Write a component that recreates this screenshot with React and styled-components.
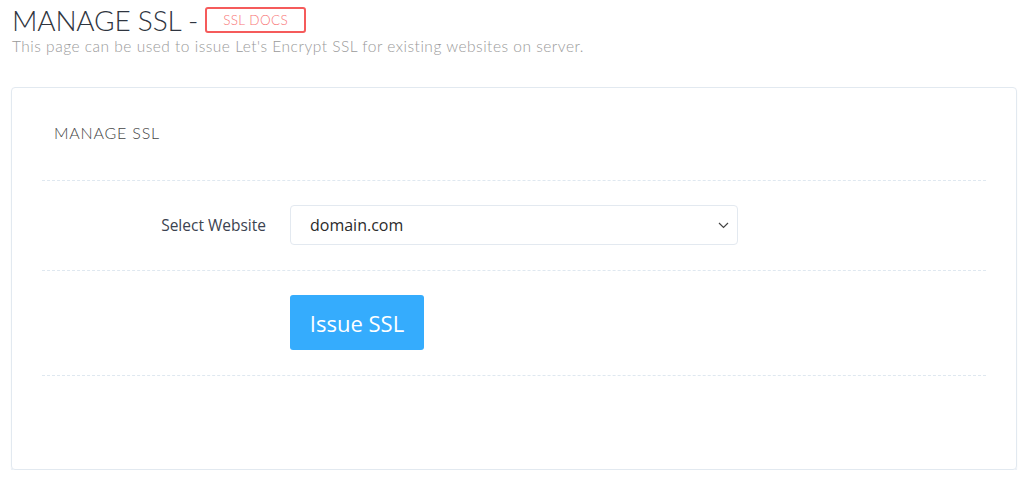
import React from 'react'
import styled, { createGlobalStyle } from 'styled-components'

const GlobalStyle = createGlobalStyle`
  body {
    margin: 0;
    background: #fff;
    font-family: 'Open Sans', 'Liberation Sans', sans-serif;
  }
`

const Page = styled.div`
  padding: 4px 8px 0 11px;
`

const Header = styled.div`
  padding-left: 1px;
  margin-bottom: 32px;
`

const Title = styled.h1`
  display: flex;
  align-items: center;
  gap: 7px;
  margin: 0;
  font-family: Lato, 'Liberation Sans', sans-serif;
  font-weight: 300;
  font-size: 28px;
  line-height: 32px;
  letter-spacing: -0.2px;
  color: #2f3540;
`

const DocsLink = styled.a`
  display: inline-flex;
  align-items: center;
  justify-content: center;
  height: 22px;
  padding: 0 16px;
  border: 2px solid #f55b5b;
  border-radius: 3px;
  font-size: 13.5px;
  font-weight: 300;
  letter-spacing: 0.4px;
  color: #f87575;
  text-decoration: none;
  margin-top: -1px;
`

const Subtitle = styled.p`
  margin: 1px 0 0;
  font-family: Lato, 'Liberation Sans', sans-serif;
  font-weight: 300;
  font-size: 15.5px;
  letter-spacing: 0.5px;
  color: #9a9a9a;
`

const Card = styled.div`
  width: 1006px;
  height: 383px;
  box-sizing: border-box;
  border: 1px solid #e2e9f0;
  border-radius: 4px;
  box-shadow: 0 2px 1px rgba(220, 228, 238, 0.7);
  padding: 0 30px;
`

const CardTitle = styled.div`
  padding: 35px 12px 38px;
  font-family: Lato, 'Liberation Sans', sans-serif;
  font-weight: 300;
  font-size: 16px;
  letter-spacing: 0.8px;
  color: #444;
  border-bottom: 1px dashed #dfe8f0;
`

const FormRow = styled.div`
  display: grid;
  grid-template-columns: 236px 472px;
  align-items: center;
  padding: 24px 0 25px;
  border-bottom: 1px dashed #dfe8f0;
`

const Label = styled.label`
  text-align: right;
  padding-right: 12px;
  font-size: 15.5px;
  color: #3c4350;
`

const Field = styled.div`
  grid-column: 2;
  padding: 0 12px;
`

const SelectBox = styled.div`
  position: relative;
  height: 40px;
  box-sizing: border-box;
  border: 1px solid #e3e9f0;
  border-radius: 4px;
  display: flex;
  align-items: center;
  padding-left: 19px;
  font-size: 16px;
  color: #2b2b2b;
`

const Chevron = styled.svg`
  position: absolute;
  right: 8px;
  top: 15px;
`

const Button = styled.button`
  width: 134px;
  height: 55px;
  border: 0;
  border-radius: 3px;
  background: #35acfd;
  color: #fff;
  font-family: 'Open Sans', 'Liberation Sans', sans-serif;
  font-size: 22px;
`

export default function App() {
  return (
    <Page>
      <GlobalStyle />
      <Header>
        <Title>
          MANAGE SSL -
          <DocsLink href="#">SSL DOCS</DocsLink>
        </Title>
        <Subtitle>This page can be used to issue Let's Encrypt SSL for existing websites on server.</Subtitle>
      </Header>
      <Card>
        <CardTitle>MANAGE SSL</CardTitle>
        <FormRow>
          <Label>Select Website</Label>
          <Field>
            <SelectBox>
              domain.com
              <Chevron width="11" height="8" viewBox="0 0 11 8">
                <path d="M1 2l4.5 4.5L10 2" fill="none" stroke="#444" strokeWidth="1.2" />
              </Chevron>
            </SelectBox>
          </Field>
        </FormRow>
        <FormRow>
          <Field>
            <Button>Issue SSL</Button>
          </Field>
        </FormRow>
      </Card>
    </Page>
  )
}
